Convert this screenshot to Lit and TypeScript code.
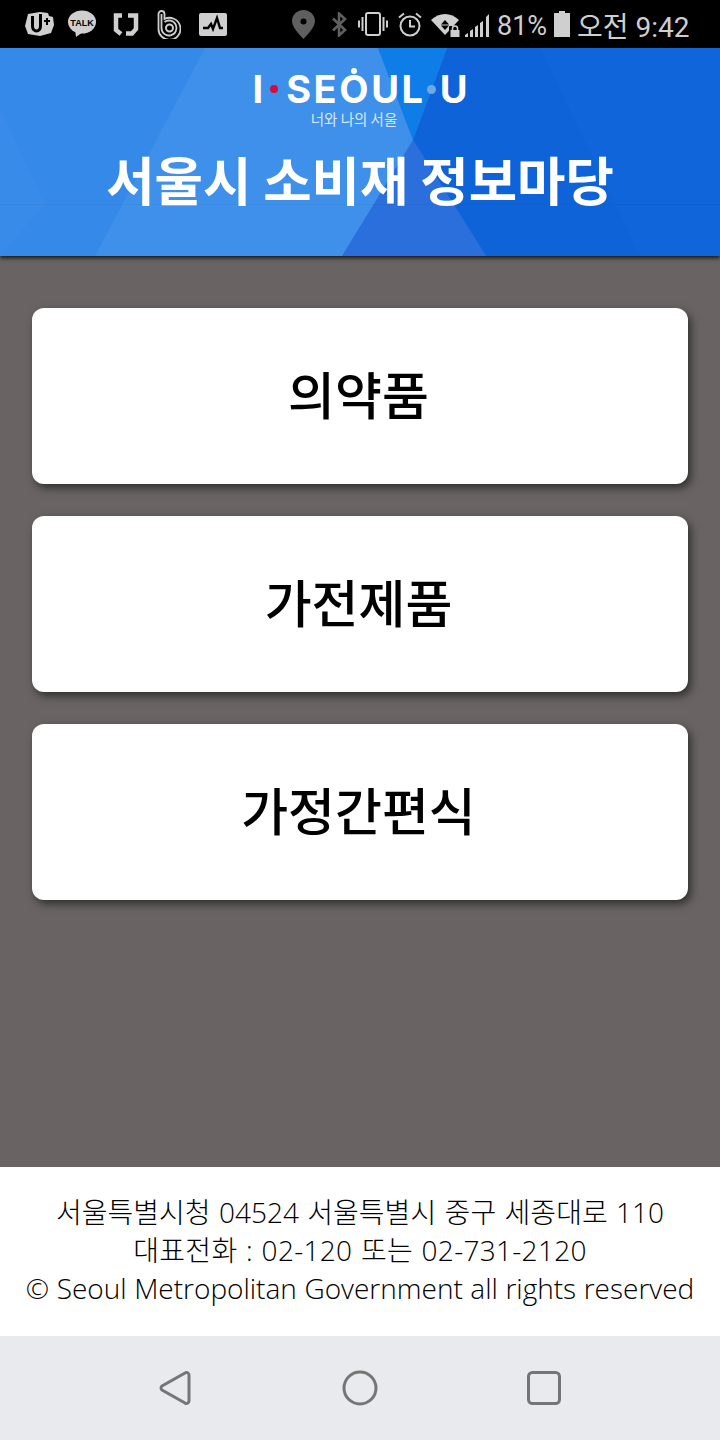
import { LitElement, html, css, svg } from 'lit';
import { customElement } from 'lit/decorators.js';

const MENU = ['의약품', '가전제품', '가정간편식'];

@customElement('status-bar')
class StatusBar extends LitElement {
  static styles = css`
    :host {
      display: flex;
      align-items: center;
      height: 48px;
      background: #000;
      color: #cfcfcf;
      font-family: Roboto, 'Noto Sans CJK KR', sans-serif;
      overflow: hidden;
    }
    svg { display: block; flex: none; }
    .i-uplus { margin-left: 24px; }
    .i-talk { margin-left: 14px; }
    .i-j { margin-left: 17px; }
    .i-b { margin-left: 18px; }
    .i-pulse { margin-left: 18px; }
    .i-pin { margin-left: 65px; }
    .i-bt { margin-left: 17px; }
    .i-vib { margin-left: 11px; }
    .i-alarm { margin-left: 10px; }
    .i-wifi { margin-left: 9px; }
    .i-signal { margin-left: 4px; }
    .pct { margin-left: 7px; padding-top: 3px; font-size: 27px; width: 49px; white-space: nowrap; }
    .i-batt { margin-left: 8px; }
    .time { margin-left: 7px; padding-top: 2px; font-size: 28px; white-space: nowrap; }
  `;

  render() {
    return html`
      <svg class="i-uplus" width="30" height="26" viewBox="0 0 30 26">
        <path fill="#cfcfcf" d="M4 3l12-2 8 1 1 3 4 1 1 8-3 8-11 3-12-2-3-8z"/>
        <path fill="none" stroke="#000" stroke-width="3" d="M8.500 5v10c0 6.500 8 6.500 8 0V3"/>
        <path fill="none" stroke="#000" stroke-width="2" d="M20 10h6M23 7v7"/>
      </svg>
      <svg class="i-talk" width="28" height="28" viewBox="0 0 28 28">
        <ellipse cx="14" cy="12" rx="14" ry="11.500" fill="#cfcfcf"/>
        <path fill="#cfcfcf" d="M7 19l1 8 7-5z"/>
        <text x="14" y="15.500" text-anchor="middle" font-family="Liberation Sans" font-weight="700" font-size="9" fill="#000">TALK</text>
      </svg>
      <svg class="i-j" width="26" height="24" viewBox="0 0 26 24">
        <path fill="none" stroke="#cfcfcf" stroke-width="4.500" d="M9 3.500H3V18l5 4M15 3.500h8V17l-4 4.500h-6"/>
      </svg>
      <svg class="i-b" width="24" height="30" viewBox="0 0 24 30">
        <path fill="none" stroke="#cfcfcf" stroke-width="1.800" d="M1.500 5a3 3 0 0 1 6 0v5a11 11 0 1 1-6 9z"/>
        <path fill="none" stroke="#cfcfcf" stroke-width="1.800" d="M4.500 5v14a7.500 7.500 0 1 0 3-6"/>
        <circle cx="12.500" cy="19" r="3.500" fill="none" stroke="#cfcfcf" stroke-width="2"/>
      </svg>
      <svg class="i-pulse" width="28" height="23" viewBox="0 0 28 23">
        <rect width="28" height="23" rx="2" fill="#cfcfcf"/>
        <path fill="none" stroke="#000" stroke-width="2.400" d="M4 15h5l3-4 2 5 4-11 3 10h3"/>
      </svg>
      <svg class="i-pin" width="23" height="29" viewBox="0 0 23 29">
        <path fill="#5f5f5f" fill-rule="evenodd" d="M11.500 0C5 0 0 5 0 11c0 6 7 13 11.500 18C16 24 23 17 23 11 23 5 18 0 11.500 0zm0 8.500a3 3 0 1 1 0 6 3 3 0 0 1 0-6z"/>
      </svg>
      <svg class="i-bt" width="15" height="25" viewBox="0 0 15 25">
        <path fill="none" stroke="#5f5f5f" stroke-width="2.600" d="M1 6.500l12 11.500-6 5.500V1.500l6 5.500L1 18.500"/>
      </svg>
      <svg class="i-vib" width="30" height="24" viewBox="0 0 30 24">
        <rect x="8" y="1" width="14" height="22" rx="2" fill="none" stroke="#cfcfcf" stroke-width="2"/>
        <path stroke="#cfcfcf" stroke-width="2" d="M4.500 5v14M1 8.500v7M25.500 5v14M29 8.500v7"/>
      </svg>
      <svg class="i-alarm" width="24" height="25" viewBox="0 0 24 25">
        <circle cx="12" cy="14" r="9.500" fill="none" stroke="#cfcfcf" stroke-width="2"/>
        <path fill="none" stroke="#cfcfcf" stroke-width="2" d="M12 8v6.500h5M1 5.500L6 1.500M23 5.500L18 1.500"/>
      </svg>
      <svg class="i-wifi" width="30" height="25" viewBox="0 0 30 25">
        <path fill="#cfcfcf" d="M0 8C8 0 20 0 28 8l-14 15z"/>
        <path fill="#000" d="M14 8l4 4.500h-8zM14 18l-4-4.500h8z"/>
        <rect x="18" y="14" width="12" height="11" rx="1" fill="#000"/>
        <rect x="19.500" y="18" width="9" height="7" fill="#cfcfcf"/>
        <path fill="none" stroke="#cfcfcf" stroke-width="1.500" d="M21.500 18v-1.500a2.500 2.500 0 0 1 5 0V18"/>
      </svg>
      <svg class="i-signal" width="25" height="25" viewBox="0 0 25 25">
        <path fill="#cfcfcf" d="M0 25v-2l3-2v4zM5 25v-6l3-2v8zM10 25V15l3-2v12zM15 25V11l3-2v16zM21 25V5l3-3v23z"/>
      </svg>
      <span class="pct">81%</span>
      <svg class="i-batt" width="16" height="26" viewBox="0 0 16 26">
        <path fill="#cfcfcf" d="M5 0h6v2h5v24H0V2h5z"/>
      </svg>
      <span class="time">오전 9:42</span>
    `;
  }
}

@customElement('brand-header')
class BrandHeader extends LitElement {
  static styles = css`
    :host {
      display: block;
      position: relative;
      height: 208px;
      background: #3589e8;
      box-shadow: 0 2px 4px rgba(0, 0, 0, 0.8);
      overflow: hidden;
      color: #fff;
      text-align: center;
    }
    .bg { position: absolute; inset: 0; }
    .content {
      position: relative;
      display: flex;
      flex-direction: column;
      align-items: center;
    }
    .logo {
      display: flex;
      align-items: center;
      justify-content: center;
      height: 36px;
      margin-top: 23px;
      font-family: Inter, sans-serif;
      font-weight: 700;
      font-size: 38px;
      line-height: 36px;
    }
    .word { letter-spacing: 2.600px; }
    .ring { position: relative; }
    .ring::before {
      content: '';
      position: absolute;
      left: 50%;
      top: 2px;
      width: 6px;
      height: 6px;
      margin-left: -4px;
      border-radius: 50%;
      background: #fff;
    }
    .dot { width: 8px; height: 8px; border-radius: 50%; margin: 0 8px 0 7px; }
    .red { background: #d40b3c; }
    .sky { width: 9px; height: 9px; background: #6fa8e4; margin: 0 4px 0 1px; }
    .tag {
      margin: 3px 12px 0 0;
      font-family: 'Noto Sans CJK KR', sans-serif;
      font-size: 14.500px;
      line-height: 18px;
      color: #d9e8fa;
    }
    h1 {
      margin: 19px 0 0;
      font-family: 'Noto Sans CJK KR', sans-serif;
      font-weight: 700;
      font-size: 52.600px;
      line-height: 62px;
      white-space: nowrap;
    }
  `;

  private background() {
    return svg`
      <polygon fill="#3e90ea" points="205,0 378,0 413,92 342,208 95,208"/>
      <polygon fill="#0f7de8" points="378,0 447,0 413,92"/>
      <polygon fill="#2a6fdc" points="413,92 342,208 486,208"/>
      <polygon fill="#0f63d9" points="447,0 720,0 720,208 486,208 413,92"/>
      <polygon fill="#1065da" points="540,0 720,0 720,208 640,208"/>
      <polygon fill="#388be9" points="0,60 45,156 0,208"/>
      <rect y="156" width="720" height="1" fill="#000" opacity="0.03"/>
    `;
  }

  render() {
    return html`
      <svg class="bg" width="720" height="208" viewBox="0 0 720 208">${this.background()}</svg>
      <div class="content">
        <div class="logo">
          <span>I</span>
          <span class="dot red"></span>
          <span class="word">SE<span class="ring">O</span>UL</span>
          <span class="dot sky"></span>
          <span>U</span>
        </div>
        <div class="tag">너와 나의 서울</div>
        <h1>서울시 소비재 정보마당</h1>
      </div>
    `;
  }
}

@customElement('app-root')
export class AppRoot extends LitElement {
  static styles = css`
    :host {
      display: flex;
      flex-direction: column;
      width: 720px;
      height: 1440px;
      overflow: hidden;
      font-family: 'Noto Sans CJK KR', sans-serif;
    }
    brand-header { z-index: 1; }
    .menu {
      flex: 1;
      display: flex;
      flex-direction: column;
      gap: 32px;
      padding: 52px 32px 0;
      background: #696463;
    }
    .menu-item {
      display: flex;
      align-items: center;
      justify-content: center;
      box-sizing: border-box;
      height: 176px;
      padding: 0 3px 6px 0;
      border-radius: 12px;
      background: #fff;
      box-shadow: 3px 4px 8px rgba(0, 0, 0, 0.55);
      color: #000;
      font-size: 51px;
      font-weight: 500;
    }
    .footer {
      height: 169px;
      box-sizing: border-box;
      padding-top: 26px;
      background: #fff;
      color: #000;
      font-family: 'Open Sans', 'Noto Sans CJK KR', sans-serif;
      font-size: 28px;
      font-weight: 300;
      line-height: 38px;
      text-align: center;
      white-space: nowrap;
    }
    .address { word-spacing: 1.200px; }
    .phone { word-spacing: 1px; letter-spacing: 0.300px; }
    .copyright { word-spacing: 0.300px; }
    .nav {
      height: 104px;
      display: flex;
      align-items: center;
      justify-content: center;
      gap: 148px;
      background: #e9eaee;
    }
    .nav svg { display: block; }
  `;

  render() {
    return html`
      <status-bar></status-bar>
      <brand-header></brand-header>
      <div class="menu">
        ${MENU.map((label) => html`<div class="menu-item">${label}</div>`)}
      </div>
      <div class="footer">
        <div class="address">서울특별시청 04524 서울특별시 중구 세종대로 110</div>
        <div class="phone">대표전화 : 02-120 또는 02-731-2120</div>
        <div class="copyright">© Seoul Metropolitan Government all rights reserved</div>
      </div>
      <div class="nav">
        <svg width="36" height="36" viewBox="0 0 36 36">
          <path fill="none" stroke="#757575" stroke-width="3" d="M31 5v26a2.500 2.500 0 0 1-4 2L4 20a2.500 2.500 0 0 1 0-4L27 3a2.500 2.500 0 0 1 4 2z"/>
        </svg>
        <svg width="36" height="36" viewBox="0 0 36 36">
          <circle cx="18" cy="18" r="16" fill="none" stroke="#757575" stroke-width="3"/>
        </svg>
        <svg width="36" height="36" viewBox="0 0 36 36">
          <rect x="2.500" y="2.500" width="31" height="31" rx="4" fill="none" stroke="#757575" stroke-width="3"/>
        </svg>
      </div>
    `;
  }
}
